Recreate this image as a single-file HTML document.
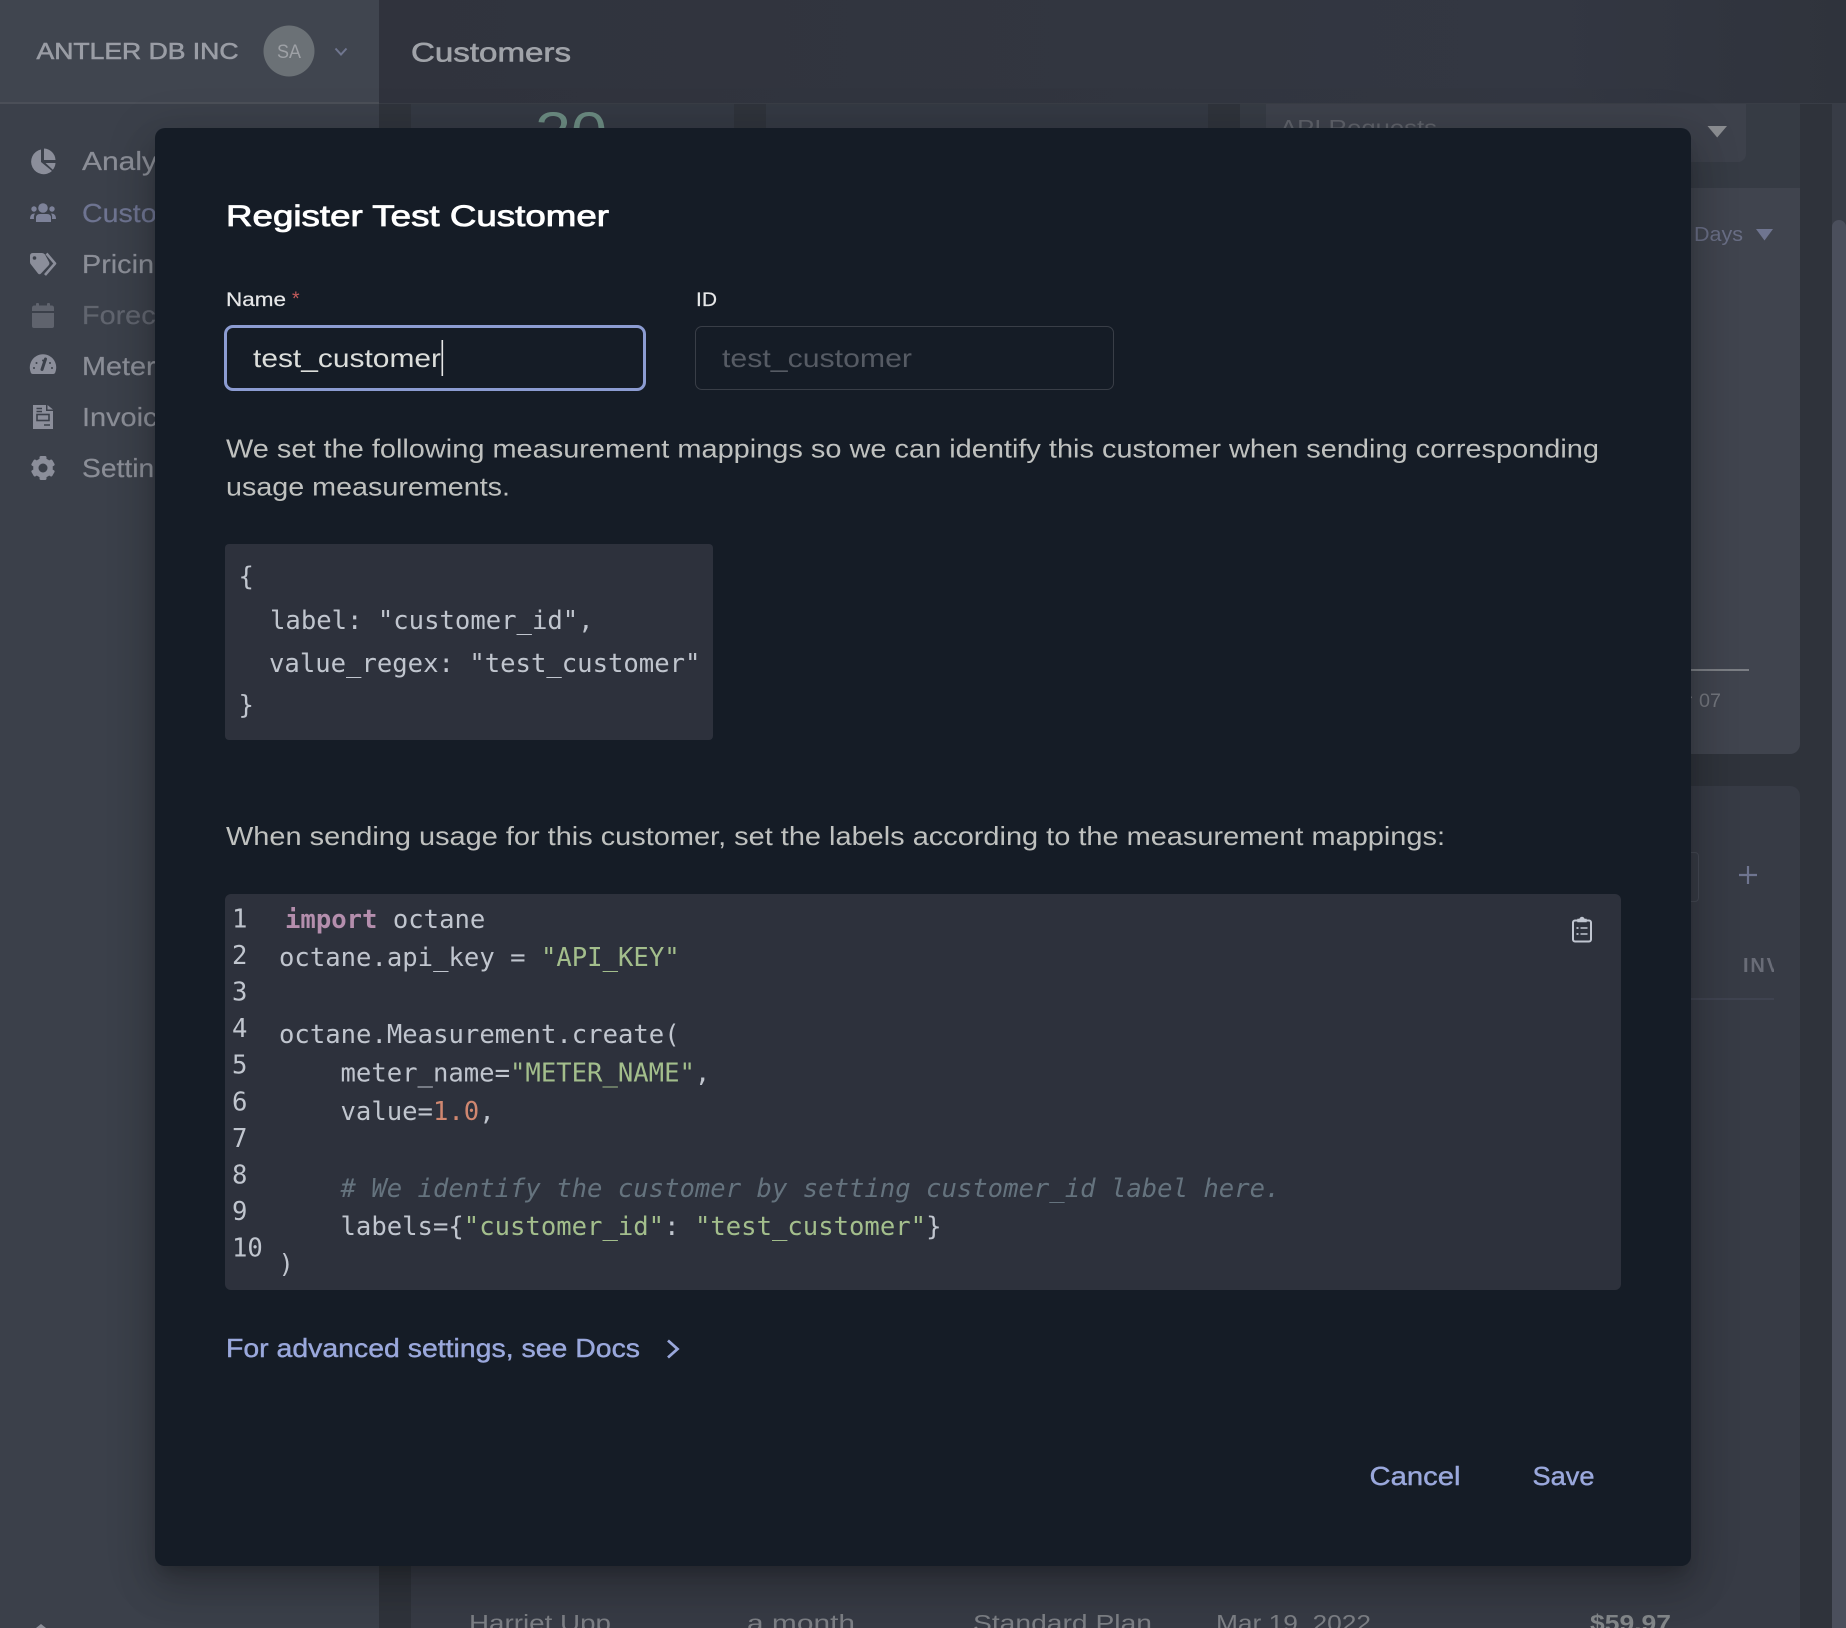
<!DOCTYPE html>
<html lang="en">
<head>
<meta charset="utf-8">
<title>Customers</title>
<style>
html,body{margin:0;padding:0;background:#2f333b;}
#page{position:relative;width:1846px;height:1628px;overflow:hidden;background:#2f333b;font-family:"Liberation Sans",sans-serif;}
.b{position:absolute;}
svg.layer{position:absolute;left:0;top:0;width:1846px;height:1628px;}
svg text{white-space:pre;}
.sans{font-family:"Liberation Sans",sans-serif;}
.mono{font-family:"DejaVu Sans Mono",monospace;font-size:25.6px;fill:#c0c5ce;}
.str{fill:#a3be8c;}
.num{fill:#d08770;}
.kw{fill:#b48ead;font-weight:bold;}
.com{fill:#65737e;font-style:italic;}
.ln{fill:#c0c5ce;}
#modal{position:absolute;left:155px;top:128px;width:1536px;height:1438px;background:#151c26;border-radius:10px;box-shadow:0 11px 15px -7px rgba(0,0,0,.2),0 24px 38px 3px rgba(0,0,0,.14),0 9px 46px 8px rgba(0,0,0,.12);}
</style>
</head>
<body>
<div id="page">
  <!-- background app -->
  <div class="b" style="left:0;top:0;width:379px;height:102px;background:#40454f;"></div>
  <div class="b" style="left:0;top:102px;width:379px;height:2px;background:#4b4f58;"></div>
  <div class="b" style="left:379px;top:0;width:1467px;height:103px;background:linear-gradient(90deg,#30333d 0%,#323640 55%,#333742 80%,#2f333c 100%);"></div>
  <div class="b" style="left:379px;top:103px;width:1467px;height:1px;background:#393d46;"></div>
  <div class="b" style="left:0;top:104px;width:379px;height:1524px;background:#3b404a;"></div>
  <div class="b" style="left:379px;top:104px;width:1453px;height:1524px;background:#2f333b;"></div>
  <div class="b" style="left:411px;top:104px;width:323px;height:60px;background:#343943;"></div>
  <div class="b" style="left:766px;top:104px;width:442px;height:60px;background:#343943;"></div>
  <div class="b" style="left:1240px;top:104px;width:560px;height:84px;background:#363b44;"></div>
  <div class="b" style="left:1266px;top:104px;width:480px;height:58px;background:#3d414b;border-radius:0 0 8px 8px;"></div>
  <div class="b" style="left:1240px;top:188px;width:560px;height:566px;background:#40444e;border-radius:0 0 10px 10px;"></div>
  <div class="b" style="left:1500px;top:786px;width:300px;height:842px;background:#373b45;border-radius:10px 10px 0 0;"></div>
  <div class="b" style="left:411px;top:1500px;width:1389px;height:128px;background:#373b45;"></div>
  <div class="b" style="left:1500px;top:852px;width:197px;height:48px;border:1px solid #454954;border-radius:4px;"></div>
  <div class="b" style="left:1500px;top:669px;width:249px;height:2px;background:#7b7e84;"></div>
  <div class="b" style="left:1500px;top:998px;width:274px;height:2px;background:#3f4350;"></div>
  <div class="b" style="left:1832px;top:104px;width:14px;height:1524px;background:#383c46;"></div>
  <div class="b" style="left:1832px;top:220px;width:14px;height:1408px;background:#4b4f5c;border-radius:7px 7px 0 0;"></div>

  <svg class="layer" viewBox="0 0 1846 1628" xmlns="http://www.w3.org/2000/svg">
    <g class="sans">
      <text x="36.5" y="59" font-size="23.5" fill="#9a9da5" stroke="#9a9da5" stroke-width=".6" textLength="202" lengthAdjust="spacingAndGlyphs">ANTLER DB INC</text>
      <circle cx="289" cy="51" r="25.5" fill="#6b7176"/>
      <text x="277" y="58" font-size="19" fill="#9ea1a6" textLength="24" lengthAdjust="spacingAndGlyphs">SA</text>
      <path d="M335.5 48.5 L341 54.5 L346.5 48.5" fill="none" stroke="#70768f" stroke-width="2"/>
      <text x="411" y="61.5" font-size="27" fill="#a0a3a9" stroke="#a0a3a9" stroke-width=".6" textLength="160" lengthAdjust="spacingAndGlyphs">Customers</text>

      <text x="82" y="170" font-size="26" fill="#8b8e97" stroke="#8b8e97" stroke-width=".2" textLength="120" lengthAdjust="spacingAndGlyphs">Analytics</text>
      <text x="82" y="222" font-size="26" fill="#6e7491" stroke="#6e7491" stroke-width=".2" textLength="138" lengthAdjust="spacingAndGlyphs">Customers</text>
      <text x="82" y="273" font-size="26" fill="#8b8e97" stroke="#8b8e97" stroke-width=".2" textLength="88" lengthAdjust="spacingAndGlyphs">Pricing</text>
      <text x="82" y="324" font-size="26" fill="#61656f" stroke="#61656f" stroke-width=".2" textLength="112" lengthAdjust="spacingAndGlyphs">Forecast</text>
      <text x="82" y="375" font-size="26" fill="#8b8e97" stroke="#8b8e97" stroke-width=".2" textLength="88" lengthAdjust="spacingAndGlyphs">Meters</text>
      <text x="82" y="426" font-size="26" fill="#8b8e97" stroke="#8b8e97" stroke-width=".2" textLength="106" lengthAdjust="spacingAndGlyphs">Invoices</text>
      <text x="82" y="477" font-size="26" fill="#8b8e97" stroke="#8b8e97" stroke-width=".2" textLength="102" lengthAdjust="spacingAndGlyphs">Settings</text>

      <text x="535" y="151" font-size="56" fill="#6a8a80" textLength="72" lengthAdjust="spacingAndGlyphs">20</text>
      <text x="1280" y="135.5" font-size="22" fill="#5f626a" textLength="157" lengthAdjust="spacingAndGlyphs">API Requests</text>
      <path d="M1707.5 126 H1727 L1717.2 137.5 Z" fill="#8a8c90"/>
      <text x="1694" y="241" font-size="20" fill="#696e85" textLength="49" lengthAdjust="spacingAndGlyphs">Days</text>
      <path d="M1756 229 H1773 L1764.5 240.5 Z" fill="#6f7590"/>
      <text x="1686" y="707" font-size="19" fill="#72757c">r</text>
      <text x="1699" y="707" font-size="19" fill="#72757c" textLength="22" lengthAdjust="spacingAndGlyphs">07</text>
      <path d="M1748 866 V884 M1739 875 H1757" stroke="#6f7590" stroke-width="2.2" fill="none"/>
      <svg x="1700" y="950" width="74" height="30" viewBox="1700 950 74 30">
        <text x="1743" y="972" font-size="20" font-weight="bold" fill="#696c77" letter-spacing="1.8">INVOICE</text>
      </svg>
      <text x="469" y="1631" font-size="23" fill="#7c7f85" textLength="142" lengthAdjust="spacingAndGlyphs">Harriet Upp</text>
      <text x="747" y="1631" font-size="23" fill="#7c7f85" textLength="108" lengthAdjust="spacingAndGlyphs">a month</text>
      <text x="973" y="1631" font-size="23" fill="#7c7f85" textLength="179" lengthAdjust="spacingAndGlyphs">Standard Plan</text>
      <text x="1216" y="1631" font-size="23" fill="#7c7f85" textLength="155" lengthAdjust="spacingAndGlyphs">Mar 19, 2022</text>
      <text x="1590" y="1631" font-size="23" font-weight="bold" fill="#83878a" textLength="81" lengthAdjust="spacingAndGlyphs">$59.97</text>
      <path d="M36 1628 L41 1624 L46 1628 Z" fill="#8b8e97"/>
    </g>

    <!-- sidebar icons -->
    <g fill="#8b8e9a">
      <path d="M41 149.5 A12.5 12.5 0 1 0 52 171 L41 162 Z"/>
      <path d="M44 148.5 A12 12 0 0 1 55.5 160 H44 Z"/>
      <path d="M45.5 163 H55.5 A12 12 0 0 1 52.8 169.8 Z"/>
    </g>
    <g fill="#7d8299">
      <circle cx="43" cy="208" r="4.8"/><circle cx="34" cy="209" r="2.7"/><circle cx="52" cy="209" r="2.7"/>
      <path d="M36 222 V218 Q36 214 40 214 H47 Q51 214 51 218 V222 Z"/>
      <path d="M30 219 Q30 213.5 35 213.5 Q33.5 215.5 34 219 Z"/>
      <path d="M56 219 Q56 213.5 51 213.5 Q52.5 215.5 52 219 Z"/>
    </g>
    <g fill="#8b8e9a">
      <path d="M30 256 Q30 253 33 253 H42 Q43.5 253 45 254.5 L49 262 Q50 264 48.5 265.5 L41 273.5 Q39.5 275 38 273.5 L31 264.5 Q30 263.5 30 262 Z"/>
      <circle cx="34.5" cy="258" r="1.8" fill="#3b404a"/>
      <path d="M46.5 253.5 L55 263.5 L45 275" fill="none" stroke="#8b8e9a" stroke-width="2.6" stroke-linejoin="round"/>
    </g>
    <g fill="#5f636d">
      <rect x="36" y="303" width="3" height="5" rx="1"/><rect x="47" y="303" width="3" height="5" rx="1"/>
      <path d="M32 311 V308 Q32 305.5 34.5 305.5 H51.5 Q54 305.5 54 308 V311 Z"/>
      <path d="M32 313 H54 V326 Q54 328 52 328 H34 Q32 328 32 326 Z"/>
    </g>
    <g>
      <path d="M33 374 Q31 374 30.6 372 A13.2 13.2 0 1 1 55.4 372 Q55 374 53 374 Z" fill="#8b8e9a"/>
      <path d="M45.5 359 L42 369.5" stroke="#3b404a" stroke-width="3" stroke-linecap="round"/>
      <g fill="#3b404a"><circle cx="43" cy="360.5" r="1"/><circle cx="36.5" cy="363" r="1"/><circle cx="34" cy="368" r="1"/><circle cx="50" cy="363" r="1"/><circle cx="52" cy="368" r="1"/></g>
    </g>
    <g>
      <path d="M33 405 H46 V411 H53 V429 H33 Z M47.5 405 L53 409.5 H47.5 Z" fill="#8b8e9a"/>
      <path d="M36.5 408.5 H42 M36.5 411.5 H42 M44 425 H50" stroke="#3b404a" stroke-width="1.4"/>
      <rect x="37" y="414.5" width="12" height="6" fill="none" stroke="#3b404a" stroke-width="1.6"/>
    </g>
    <g fill="#8b8e9a">
      <circle cx="43" cy="468" r="9.8"/>
      <rect x="39.5" y="456" width="7" height="24" rx="1.5"/>
      <rect x="39.5" y="456" width="7" height="24" rx="1.5" transform="rotate(60 43 468)"/>
      <rect x="39.5" y="456" width="7" height="24" rx="1.5" transform="rotate(120 43 468)"/>
      <circle cx="43" cy="468" r="4.5" fill="#3b404a"/>
    </g>
  </svg>

  <!-- modal -->
  <div id="modal"></div>
  <div class="b" style="left:224px;top:325px;width:416px;height:60px;border:3px solid #8c9cd2;border-radius:9px;"></div>
  <div class="b" style="left:695px;top:326px;width:417px;height:62px;border:1.6px solid #393e47;border-radius:7px;"></div>
  <div class="b" style="left:225px;top:544px;width:488px;height:196px;background:#2d313c;border-radius:4px;"></div>
  <div class="b" style="left:225px;top:894px;width:1396px;height:396px;background:#2d313c;border-radius:6px;"></div>

  <svg class="layer" viewBox="0 0 1846 1628" xmlns="http://www.w3.org/2000/svg">
    <g class="sans">
      <text x="226" y="226" font-size="30" fill="#ffffff" stroke="#ffffff" stroke-width=".8" textLength="383" lengthAdjust="spacingAndGlyphs">Register Test Customer</text>
      <text x="226" y="306" font-size="19.5" fill="#e6e7e8" stroke="#e6e7e8" stroke-width=".2" textLength="60" lengthAdjust="spacingAndGlyphs">Name</text>
      <text x="292" y="305" font-size="19.5" fill="#c25b5b">*</text>
      <text x="696" y="306" font-size="19.5" fill="#e6e7e8" stroke="#e6e7e8" stroke-width=".2" textLength="21" lengthAdjust="spacingAndGlyphs">ID</text>
      <text x="253" y="367" font-size="26" fill="#dcdedb" textLength="188" lengthAdjust="spacingAndGlyphs">test_customer</text>
      <rect x="441.5" y="340" width="1.6" height="36" fill="#e6e6e6"/>
      <text x="722" y="367" font-size="26" fill="#565b64" textLength="190" lengthAdjust="spacingAndGlyphs">test_customer</text>
      <text x="226" y="457.5" font-size="26" fill="#bfc1bf" textLength="1373" lengthAdjust="spacingAndGlyphs">We set the following measurement mappings so we can identify this customer when sending corresponding</text>
      <text x="226" y="495.5" font-size="26" fill="#bfc1bf" textLength="284" lengthAdjust="spacingAndGlyphs">usage measurements.</text>
      <text x="226" y="845" font-size="26" fill="#bfc1bf" textLength="1219" lengthAdjust="spacingAndGlyphs">When sending usage for this customer, set the labels according to the measurement mappings:</text>
      <text x="226" y="1357" font-size="26" fill="#9aa8dc" stroke="#9aa8dc" stroke-width=".4" textLength="414" lengthAdjust="spacingAndGlyphs">For advanced settings, see Docs</text>
      <path d="M668 1340.5 L677.5 1349 L668 1357.5" fill="none" stroke="#9aa8dc" stroke-width="2.8"/>
      <text x="1369.5" y="1485" font-size="26" fill="#9aa8dc" stroke="#9aa8dc" stroke-width=".4" textLength="91" lengthAdjust="spacingAndGlyphs">Cancel</text>
      <text x="1532.5" y="1485" font-size="26" fill="#9aa8dc" stroke="#9aa8dc" stroke-width=".4" textLength="62" lengthAdjust="spacingAndGlyphs">Save</text>
    </g>

    <g class="mono" style="fill:#c0c5ce">
      <text class="mono" x="238.5" y="585">{</text>
      <text class="mono" x="270" y="629">label: "customer_id",</text>
      <text class="mono" x="269" y="672">value_regex: "test_customer"</text>
      <text class="mono" x="238.5" y="713.5">}</text>

      <text class="mono ln" x="232" y="927.3">1</text>
      <text class="mono ln" x="232" y="963.9">2</text>
      <text class="mono ln" x="232" y="1000.5">3</text>
      <text class="mono ln" x="232" y="1037.1">4</text>
      <text class="mono ln" x="232" y="1073.7">5</text>
      <text class="mono ln" x="232" y="1110.3">6</text>
      <text class="mono ln" x="232" y="1146.9">7</text>
      <text class="mono ln" x="232" y="1183.5">8</text>
      <text class="mono ln" x="232" y="1220.1">9</text>
      <text class="mono ln" x="232" y="1256.7">10</text>

      <text class="mono" x="285" y="928"><tspan class="kw">import</tspan> octane</text>
      <text class="mono" x="279" y="966">octane.api_key = <tspan class="str">"API_KEY"</tspan></text>
      <text class="mono" x="279" y="1043.2">octane.Measurement.create(</text>
      <text class="mono" x="340.5" y="1081.6">meter_name=<tspan class="str">"METER_NAME"</tspan>,</text>
      <text class="mono" x="340.5" y="1120">value=<tspan class="num">1.0</tspan>,</text>
      <text class="mono com" x="340.5" y="1196.8"># We identify the customer by setting customer_id label here.</text>
      <text class="mono" x="340.5" y="1235.2">labels={<tspan class="str">"customer_id"</tspan>: <tspan class="str">"test_customer"</tspan>}</text>
      <text class="mono" x="278.5" y="1272.5">)</text>
    </g>

    <!-- clipboard icon -->
    <g fill="none" stroke="#c0c5d0" stroke-width="2">
      <rect x="1573" y="920.5" width="18" height="21" rx="2"/>
      <path d="M1578 920.5 V919.5 H1580 A2 2 0 0 1 1584 919.5 H1586 V921.5 H1578 Z" fill="#c0c5d0" stroke-width="1.4"/>
      <path d="M1580.5 928 H1587.5 M1580.5 934 H1587.5" stroke-width="1.6"/>
      <path d="M1576.5 928 H1578.5 M1576.5 934 H1578.5" stroke-width="1.8"/>
    </g>
  </svg>
</div>
</body>
</html>
